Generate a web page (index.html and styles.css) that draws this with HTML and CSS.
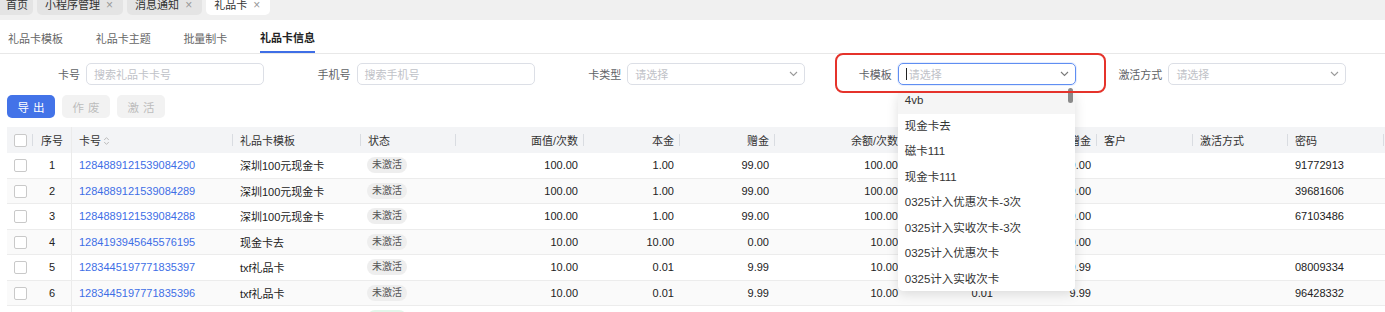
FILE: index.html
```html
<!DOCTYPE html>
<html lang="zh-CN">
<head>
  <meta charset="UTF-8">
  <title>礼品卡信息</title>
  <link rel="stylesheet" href="styles.css">
</head>
<body>
  <div class="tags-bar">
    <div class="tag-tab first">首页</div>
    <div class="tag-tab">小程序管理 <span class="close">×</span></div>
    <div class="tag-tab">消息通知 <span class="close">×</span></div>
    <div class="tag-tab active">礼品卡 <span class="close">×</span></div>
  </div>

  <div class="sub-tabs">
    <div class="sub-tab">礼品卡模板</div>
    <div class="sub-tab">礼品卡主题</div>
    <div class="sub-tab">批量制卡</div>
    <div class="sub-tab active">礼品卡信息</div>
  </div>

  <div class="filters">
    <div class="filter-item">
      <label class="filter-label">卡号</label>
      <div class="control"><span class="placeholder">搜索礼品卡卡号</span></div>
    </div>
    <div class="filter-item">
      <label class="filter-label">手机号</label>
      <div class="control"><span class="placeholder">搜索手机号</span></div>
    </div>
    <div class="filter-item">
      <label class="filter-label">卡类型</label>
      <div class="control select">
        <span class="placeholder">请选择</span>
        <svg class="arrow" width="9" height="6" viewBox="0 0 9 6"><path d="M1 1l3.5 3.5L8 1" fill="none" stroke="#9a9a9a" stroke-width="1.1"/></svg>
      </div>
    </div>
    <div class="filter-item">
      <label class="filter-label">卡模板</label>
      <div class="control select focused">
        <span class="caret"></span><span class="placeholder">请选择</span>
        <svg class="arrow" width="9" height="6" viewBox="0 0 9 6"><path d="M1 1l3.5 3.5L8 1" fill="none" stroke="#7a7a7a" stroke-width="1.1"/></svg>
        <div class="dropdown">
          <ul>
            <li class="hover">4vb</li>
            <li>现金卡去</li>
            <li>磁卡111</li>
            <li>现金卡111</li>
            <li>0325计入优惠次卡-3次</li>
            <li>0325计入实收次卡-3次</li>
            <li>0325计入优惠次卡</li>
            <li>0325计入实收次卡</li>
            <li>0325次卡</li>
          </ul>
        </div>
        <div class="thumb"></div>
      </div>
    </div>
    <div class="filter-item">
      <label class="filter-label">激活方式</label>
      <div class="control select">
        <span class="placeholder">请选择</span>
        <svg class="arrow" width="9" height="6" viewBox="0 0 9 6"><path d="M1 1l3.5 3.5L8 1" fill="none" stroke="#9a9a9a" stroke-width="1.1"/></svg>
      </div>
    </div>
  </div>

  <div class="actions">
    <button class="btn primary">导出</button>
    <button class="btn disabled">作废</button>
    <button class="btn disabled">激活</button>
  </div>

  <div class="table-wrap">
    <table class="grid">
      <colgroup>
        <col style="width:26px"><col style="width:39px"><col style="width:161px"><col style="width:128px">
        <col style="width:95px"><col style="width:128px"><col style="width:96px"><col style="width:95px">
        <col style="width:129px"><col style="width:95px"><col style="width:98px"><col style="width:96px">
        <col style="width:95px"><col style="width:96px"><col style="width:96px">
      </colgroup>
      <thead>
        <tr>
          <th class="c"><span class="check"></span></th>
          <th class="c fixed">序号</th>
          <th>卡号<svg class="sort" width="7" height="10" viewBox="0 0 7 10"><path d="M1.2 4L3.5 1.6 5.8 4M1.2 6l2.3 2.4L5.8 6" fill="none" stroke="#b5b5b5" stroke-width="0.9"/></svg></th>
          <th>礼品卡模板</th>
          <th>状态</th>
          <th class="r">面值/次数</th>
          <th class="r">本金</th>
          <th class="r">赠金</th>
          <th class="r">余额/次数</th>
          <th class="r">剩余本金</th>
          <th class="r">剩余赠金</th>
          <th>客户</th>
          <th>激活方式</th>
          <th>密码</th>
          <th>操作</th>
        </tr>
      </thead>
      <tbody>
        <tr>
          <td class="c"><span class="check"></span></td><td class="c fixed">1</td>
          <td><span class="link">1284889121539084290</span></td><td>深圳100元现金卡</td>
          <td><span class="status">未激活</span></td>
          <td class="r">100.00</td><td class="r">1.00</td><td class="r">99.00</td><td class="r">100.00</td><td class="r">1.00</td><td class="r">99.00</td>
          <td></td><td></td><td>91772913</td><td></td>
        </tr>
        <tr>
          <td class="c"><span class="check"></span></td><td class="c fixed">2</td>
          <td><span class="link">1284889121539084289</span></td><td>深圳100元现金卡</td>
          <td><span class="status">未激活</span></td>
          <td class="r">100.00</td><td class="r">1.00</td><td class="r">99.00</td><td class="r">100.00</td><td class="r">1.00</td><td class="r">99.00</td>
          <td></td><td></td><td>39681606</td><td></td>
        </tr>
        <tr>
          <td class="c"><span class="check"></span></td><td class="c fixed">3</td>
          <td><span class="link">1284889121539084288</span></td><td>深圳100元现金卡</td>
          <td><span class="status">未激活</span></td>
          <td class="r">100.00</td><td class="r">1.00</td><td class="r">99.00</td><td class="r">100.00</td><td class="r">1.00</td><td class="r">99.00</td>
          <td></td><td></td><td>67103486</td><td></td>
        </tr>
        <tr>
          <td class="c"><span class="check"></span></td><td class="c fixed">4</td>
          <td><span class="link">1284193945645576195</span></td><td>现金卡去</td>
          <td><span class="status">未激活</span></td>
          <td class="r">10.00</td><td class="r">10.00</td><td class="r">0.00</td><td class="r">10.00</td><td class="r">10.00</td><td class="r">0.00</td>
          <td></td><td></td><td></td><td></td>
        </tr>
        <tr>
          <td class="c"><span class="check"></span></td><td class="c fixed">5</td>
          <td><span class="link">1283445197771835397</span></td><td>txf礼品卡</td>
          <td><span class="status">未激活</span></td>
          <td class="r">10.00</td><td class="r">0.01</td><td class="r">9.99</td><td class="r">10.00</td><td class="r">0.01</td><td class="r">9.99</td>
          <td></td><td></td><td>08009334</td><td></td>
        </tr>
        <tr>
          <td class="c"><span class="check"></span></td><td class="c fixed">6</td>
          <td><span class="link">1283445197771835396</span></td><td>txf礼品卡</td>
          <td><span class="status">未激活</span></td>
          <td class="r">10.00</td><td class="r">0.01</td><td class="r">9.99</td><td class="r">10.00</td><td class="r">0.01</td><td class="r">9.99</td>
          <td></td><td></td><td>96428332</td><td></td>
        </tr>
        <tr>
          <td class="c"><span class="check"></span></td><td class="c fixed">7</td>
          <td><span class="link">1283445197771835395</span></td><td>txf礼品卡</td>
          <td><span class="status on">已激活</span></td>
          <td class="r">10.00</td><td class="r">0.01</td><td class="r">9.99</td><td class="r">10.00</td><td class="r">0.01</td><td class="r">9.99</td>
          <td></td><td></td><td>51830276</td><td></td>
        </tr>
      </tbody>
    </table>
  </div>

  <div class="mark"></div>
</body>
</html>
```

FILE: styles.css
```css
body {
  margin: 0;
  width: 1385px;
  height: 312px;
  overflow: hidden;
  position: relative;
  background: #fff;
  font-family: "Liberation Sans", "Noto Sans CJK SC", sans-serif;
  font-size: 11px;
  color: #333;
}

/* top page tags */
.tags-bar {
  height: 20px;
  background: #f0f0f0;
  display: flex;
  gap: 4px;
  align-items: flex-start;
}

.tag-tab {
  height: 15px;
  line-height: 11px;
  padding: 0 10px 0 8px;
  background: #e4e4e4;
  border-radius: 0 0 5px 5px;
  color: #333;
  white-space: nowrap;
  box-sizing: border-box;
}

.tag-tab.first {
  padding-left: 6px;
  padding-right: 5px;
  border-radius: 0 0 5px 0;
}

.tag-tab.active {
  background: #fff;
}

.tag-tab .close {
  color: #999;
  font-size: 12px;
  margin-left: 3px;
}

/* sub tabs */
.sub-tabs {
  display: flex;
  gap: 32.7px;
  padding-left: 8px;
  height: 34px;
  box-sizing: border-box;
  border-bottom: 1px solid #e8e8e8;
}

.sub-tab {
  height: 33px;
  box-sizing: border-box;
  padding-top: 3px;
  display: flex;
  align-items: center;
  color: #666;
  font-size: 11px;
}

.sub-tab.active {
  color: #222;
  font-weight: bold;
  border-bottom: 2px solid #3e6ee6;
}

/* filters */
.filters {
  display: flex;
  gap: 6.6px;
  margin-top: 9px;
}

.filter-item {
  display: flex;
  align-items: center;
}

.filter-label {
  width: 80px;
  margin-right: 6px;
  text-align: right;
  color: #606266;
}

.control {
  position: relative;
  width: 178px;
  height: 22px;
  box-sizing: border-box;
  border: 1px solid #dcdfe6;
  border-radius: 5px;
  padding: 0 7px;
  display: flex;
  align-items: center;
}

.placeholder {
  color: #bfc2c8;
  flex: 1;
}

.control .arrow {
  margin-right: -1px;
}

.control.focused {
  border-color: #5f8ef2;
  box-shadow: 0 0 0 1px rgba(95, 142, 242, 0.15);
}

.caret {
  width: 1px;
  height: 12px;
  background: #222;
  margin-right: 2px;
}

.dropdown {
  position: absolute;
  top: calc(100% + 9px);
  left: -1px;
  width: 177px;
  height: 198px;
  overflow: hidden;
  background: #fff;
  border-radius: 0 0 5px 5px;
  box-shadow: 0 3px 12px rgba(0, 0, 0, 0.13);
  z-index: 10;
}

.dropdown ul {
  list-style: none;
  margin: -5px 0 0;
  padding: 0;
}

.dropdown li {
  height: 25.5px;
  line-height: 25.5px;
  padding-left: 7px;
  font-size: 11.5px;
  color: #333;
  white-space: nowrap;
}

.dropdown li.hover {
  background: #f5f5f5;
}

.thumb {
  position: absolute;
  top: calc(100% + 4px);
  right: 2px;
  width: 5px;
  height: 15px;
  border-radius: 3px;
  background: #8a8a8a;
  z-index: 11;
}

/* buttons */
.actions {
  display: flex;
  gap: 7px;
  margin-top: 10px;
  padding-left: 7px;
}

.btn {
  width: 48px;
  height: 23px;
  border: none;
  border-radius: 5px;
  font-family: inherit;
  font-size: 11.5px;
  letter-spacing: 4px;
  padding: 0 0 0 4px;
}

.btn.primary {
  background: #4373e8;
  color: #fff;
}

.btn.disabled {
  background: #f2f2f2;
  color: #bdbdbd;
}

/* table */
.table-wrap {
  margin-top: 9px;
  margin-left: 7px;
}

.grid {
  table-layout: fixed;
  width: 1473px;
  border-collapse: separate;
  border-spacing: 0;
}

.grid th {
  position: relative;
  height: 26px;
  padding: 0 7px;
  background: #f3f4f6;
  font-weight: normal;
  text-align: left;
  color: #333;
  white-space: nowrap;
  box-sizing: border-box;
}

.grid th::after {
  content: "";
  position: absolute;
  right: 0;
  top: 7px;
  width: 1px;
  height: 12px;
  background: #d9dce1;
}

.grid th.fixed::after {
  display: none;
}

.grid td {
  height: 25.5px;
  padding: 0 7px;
  border-bottom: 1px solid #ececec;
  color: #222;
  white-space: nowrap;
  box-sizing: border-box;
}

.grid tbody tr:nth-child(even) td {
  background: #fafafa;
}

.grid .c {
  text-align: center;
  padding: 0;
}

.grid .r {
  text-align: right;
  padding-right: 6px;
}

.grid .fixed {
  border-right: 1px solid #ebebeb;
}

.check {
  display: inline-block;
  vertical-align: middle;
  width: 13px;
  height: 13px;
  box-sizing: border-box;
  border: 1px solid #c9c9c9;
  border-radius: 2px;
  background: #fff;
}

.sort {
  vertical-align: -1px;
  margin-left: 2px;
}

.link {
  color: #3e6ee6;
}

.status {
  display: inline-block;
  height: 16px;
  line-height: 16px;
  padding: 0 5px;
  border-radius: 8px;
  background: #eeeeee;
  color: #555;
  font-size: 10px;
  margin-left: -1px;
}

.status.on {
  background: #e3f6ea;
  color: #3aa55d;
}

/* annotation */
.mark {
  position: absolute;
  left: 835px;
  top: 53px;
  width: 271px;
  height: 40px;
  box-sizing: border-box;
  border: 2px solid #e5332b;
  border-radius: 8px;
  z-index: 20;
  pointer-events: none;
}
```
